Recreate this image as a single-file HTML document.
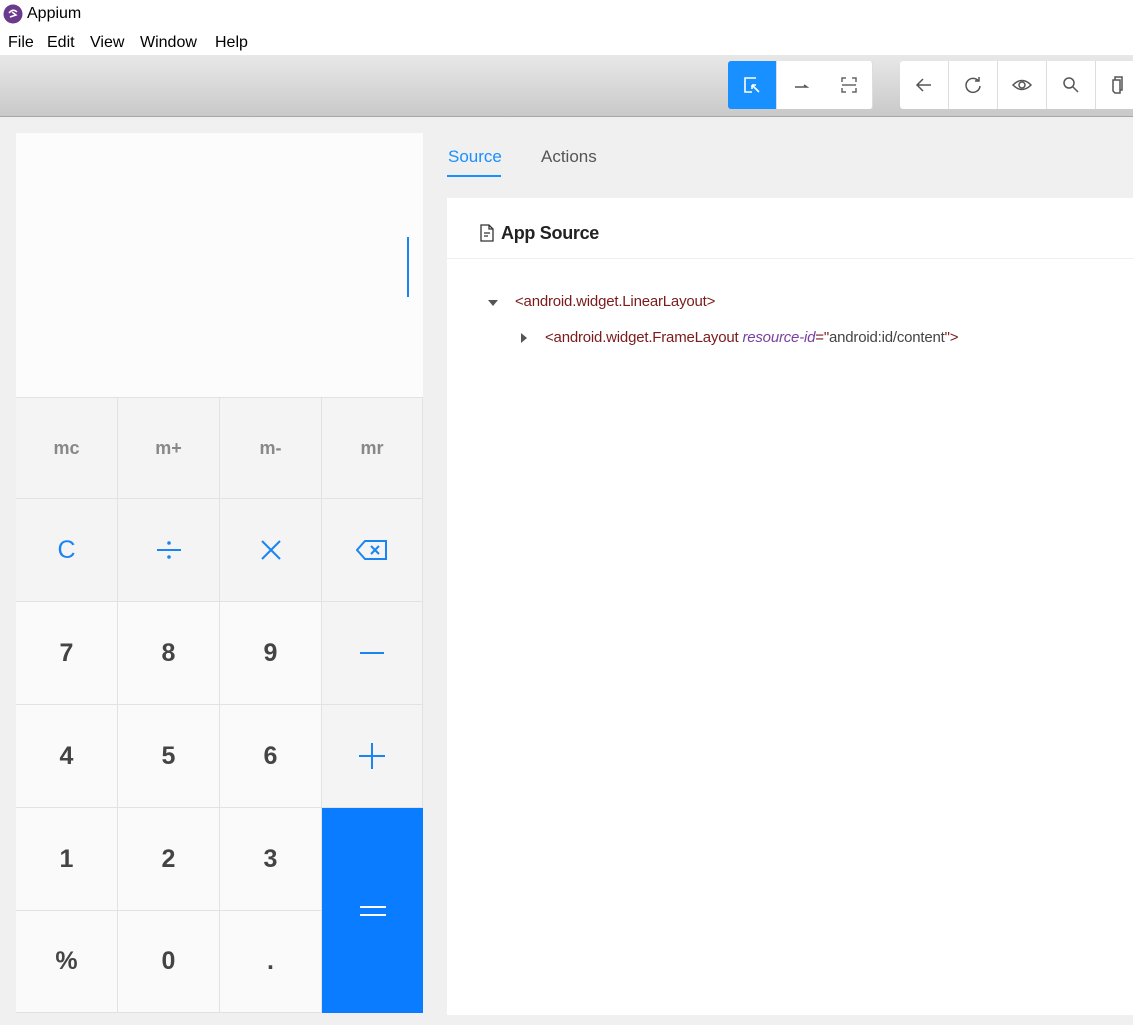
<!DOCTYPE html><html><head><meta charset="utf-8"><style>
*{margin:0;padding:0;box-sizing:border-box}
body{width:1133px;height:1025px;overflow:hidden;background:#f0f0f0;font-family:"Liberation Sans",sans-serif;position:relative}
.abs{position:absolute}
.title{left:0;top:0;width:1133px;height:55px;background:#fff}
.tb{left:0;top:55px;width:1133px;height:62px;background:linear-gradient(#e8e8e8,#c9c9c9);border-bottom:1px solid #a8a8a8}
.btn{position:absolute;top:61px;width:49px;height:48px;background:#fff;border-right:1px solid #ddd;display:flex;align-items:center;justify-content:center}
.cell{position:absolute;display:flex;align-items:center;justify-content:center;border-right:1px solid #e2e2e2;border-bottom:1px solid #e2e2e2;font-size:25px;font-weight:bold;color:#444}
.g{background:#f4f4f4}.w{background:#fafafa}.b{color:#1a84f5;font-weight:normal}
.m{font-size:18px;color:#888;font-weight:bold}
</style></head><body>
<div class="abs title"></div>
<svg class="abs" style="left:3px;top:4px" width="20" height="20" viewBox="0 0 20 20"><circle cx="10" cy="10" r="9.5" fill="#6b3a8c"/><path d="M6 9 Q10 4 14 8 M7 13 L13 11 L9 8" stroke="#fff" stroke-width="1.5" fill="none"/></svg>
<div class="abs" style="left:27px;top:5px;font-size:16px;color:#000">Appium</div>
<div class="abs" style="left:8px;top:34px;font-size:16px;color:#000">File</div>
<div class="abs" style="left:47px;top:34px;font-size:16px;color:#000">Edit</div>
<div class="abs" style="left:90px;top:34px;font-size:16px;color:#000">View</div>
<div class="abs" style="left:140px;top:34px;font-size:16px;color:#000">Window</div>
<div class="abs" style="left:215px;top:34px;font-size:16px;color:#000">Help</div>
<div class="abs tb"></div>
<div class="btn" style="left:728px;background:#1890ff;border-radius:3px 0 0 3px"><svg width="20" height="20" viewBox="0 0 20 20" fill="none" stroke="#fff" stroke-width="1.6"><path d="M14 3H3v14h7"/><path d="M17 17l-7-7M10 10v4M10 10h4"/></svg></div>
<div class="btn" style="left:777px"><svg width="20" height="20"><path d="M4 12h12l-3-2" stroke="#555" stroke-width="1.4" fill="none"/></svg></div>
<div class="btn" style="left:825px;width:48px;border-radius:0 3px 3px 0"><svg width="20" height="20" fill="none" stroke="#666" stroke-width="1.5"><path d="M3 7V3h4M13 3h4v4M3 13v4h4M13 17h4v-4M3 10h14"/></svg></div>
<div class="btn" style="left:900px;border-radius:3px 0 0 3px"><svg width="20" height="20" fill="none" stroke="#555" stroke-width="1.5"><path d="M17 10H3M9 4l-6 6 6 6"/></svg></div>
<div class="btn" style="left:949px"><svg width="20" height="20" fill="none" stroke="#555" stroke-width="1.5"><path d="M15.5 6A7 7 0 1 0 17 11M16 2v4h-4"/></svg></div>
<div class="btn" style="left:998px"><svg width="22" height="20" fill="none" stroke="#555" stroke-width="1.5"><path d="M2 10Q11 1 20 10Q11 19 2 10Z"/><circle cx="11" cy="10" r="3"/></svg></div>
<div class="btn" style="left:1047px"><svg width="20" height="20" fill="none" stroke="#555" stroke-width="1.5"><circle cx="8" cy="8" r="5"/><path d="M12 12l5 5"/></svg></div>
<div class="btn" style="left:1096px;width:40px"><svg width="20" height="20" fill="none" stroke="#555" stroke-width="1.5"><path d="M7 5h7v13H9l-2-2z"/><path d="M9 5V2h7v13h-2"/></svg></div>

<div class="abs" style="left:16px;top:133px;width:407px;height:264px;background:#fcfcfc"></div>
<div class="abs" style="left:407px;top:237px;width:2px;height:60px;background:#1a84f5"></div>
<div class="cell g m" style="left:16px;top:397px;width:102px;height:102px;border-top:1px solid #e2e2e2">mc</div>
<div class="cell g m" style="left:118px;top:397px;width:102px;height:102px;border-top:1px solid #e2e2e2">m+</div>
<div class="cell g m" style="left:220px;top:397px;width:102px;height:102px;border-top:1px solid #e2e2e2">m-</div>
<div class="cell g m" style="left:322px;top:397px;width:101px;height:102px;border-top:1px solid #e2e2e2">mr</div>
<div class="cell g b" style="left:16px;top:499px;width:102px;height:103px">C</div>
<div class="cell g b" style="left:118px;top:499px;width:102px;height:103px"><svg width="24" height="20" fill="#1a84f5"><rect x="0" y="9" width="24" height="2"/><circle cx="12" cy="3" r="1.8"/><circle cx="12" cy="17" r="1.8"/></svg></div>
<div class="cell g b" style="left:220px;top:499px;width:102px;height:103px"><svg width="22" height="22" stroke="#1a84f5" stroke-width="2"><path d="M2 2l18 18M20 2L2 20"/></svg></div>
<div class="cell g b" style="left:322px;top:499px;width:101px;height:103px"><svg width="32" height="22" fill="none" stroke="#1a84f5" stroke-width="2"><path d="M9 2h21v18H9L1 11z"/><path d="M15 7l8 8M23 7l-8 8"/></svg></div>
<div class="cell w" style="left:16px;top:602px;width:102px;height:103px">7</div>
<div class="cell w" style="left:118px;top:602px;width:102px;height:103px">8</div>
<div class="cell w" style="left:220px;top:602px;width:102px;height:103px">9</div>
<div class="cell g" style="left:322px;top:602px;width:101px;height:103px"><div style="width:24px;height:2px;background:#1a84f5"></div></div>
<div class="cell w" style="left:16px;top:705px;width:102px;height:103px">4</div>
<div class="cell w" style="left:118px;top:705px;width:102px;height:103px">5</div>
<div class="cell w" style="left:220px;top:705px;width:102px;height:103px">6</div>
<div class="cell g" style="left:322px;top:705px;width:101px;height:103px"><svg width="26" height="26" stroke="#1a84f5" stroke-width="2"><path d="M0 13h26M13 0v26"/></svg></div>
<div class="cell w" style="left:16px;top:808px;width:102px;height:103px">1</div>
<div class="cell w" style="left:118px;top:808px;width:102px;height:103px">2</div>
<div class="cell w" style="left:220px;top:808px;width:102px;height:103px">3</div>
<div class="cell w" style="left:16px;top:911px;width:102px;height:102px">%</div>
<div class="cell w" style="left:118px;top:911px;width:102px;height:102px">0</div>
<div class="cell w" style="left:220px;top:911px;width:102px;height:102px">.</div>
<div class="cell" style="left:322px;top:808px;width:101px;height:205px;background:#0a7cff;border:none"><svg width="26" height="12" stroke="#fff" stroke-width="2"><path d="M0 2h26M0 10h26"/></svg></div>

<div class="abs" style="left:448px;top:147px;font-size:17px;color:#1890ff">Source</div>
<div class="abs" style="left:447px;top:175px;width:54px;height:2px;background:#1890ff"></div>
<div class="abs" style="left:541px;top:147px;font-size:17px;color:#555">Actions</div>
<div class="abs" style="left:447px;top:198px;width:686px;height:817px;background:#fff"></div>
<div class="abs" style="left:447px;top:258px;width:686px;height:1px;background:#eee"></div>
<svg class="abs" style="left:480px;top:224px" width="14" height="18" fill="none" stroke="#333" stroke-width="1.3"><path d="M1 1h8l4 4v12H1z M9 1v4h4 M4 9h6M4 12h4"/></svg>
<div class="abs" style="left:501px;top:223px;font-size:18px;color:#222;font-weight:bold;letter-spacing:-0.3px">App Source</div>
<svg class="abs" style="left:488px;top:299px" width="10" height="8"><path d="M0 1h10L5 7z" fill="#555"/></svg>
<div class="abs" style="left:515px;top:293px;font-size:15px;color:#7a1b1b;letter-spacing:-0.2px">&lt;android.widget.LinearLayout&gt;</div>
<svg class="abs" style="left:520px;top:333px" width="8" height="10"><path d="M1 0v10l6-5z" fill="#555"/></svg>
<div class="abs" style="left:545px;top:329px;font-size:15px;color:#7a1b1b;letter-spacing:-0.2px">&lt;android.widget.FrameLayout <i style="color:#7a3fa0">resource-id</i>="<span style="color:#444">android:id/content</span>"&gt;</div>
</body></html>
